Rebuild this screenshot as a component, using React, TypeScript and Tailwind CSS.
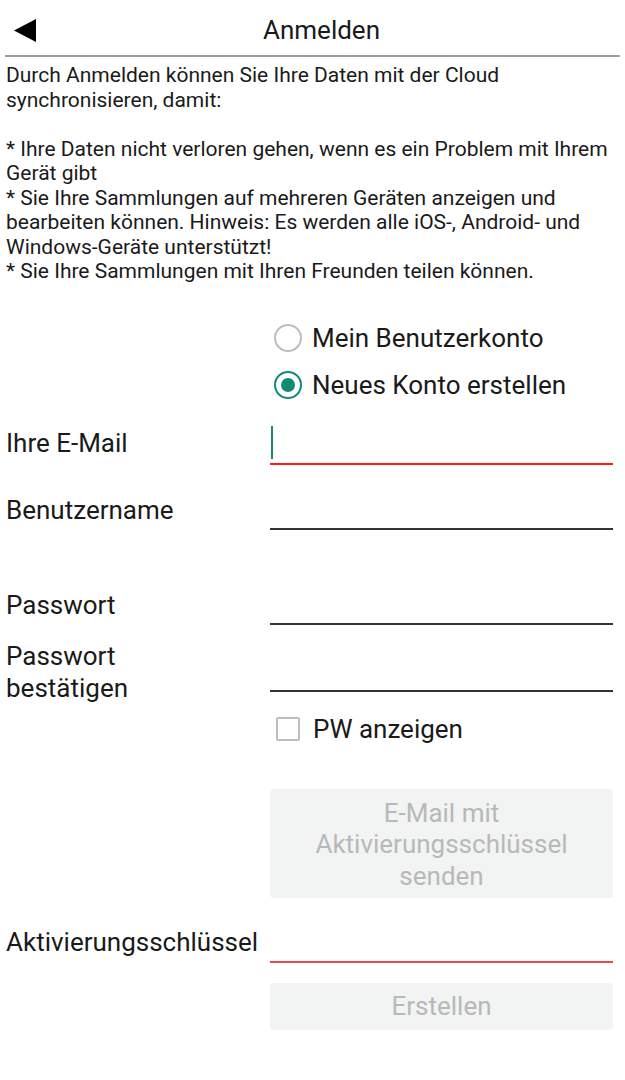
import { useState } from "react";

const font = { fontFamily: "Roboto, 'Noto Sans', sans-serif" };

function Radio({ checked, label }: { checked: boolean; label: string }) {
  return (
    <div className="flex h-[47px] items-center">
      <div
        className={
          checked
            ? "ml-[4px] flex h-[28px] w-[28px] items-center justify-center rounded-full border-[2.5px] border-[#128a78]"
            : "ml-[4px] flex h-[28px] w-[28px] items-center justify-center rounded-full border-[2.5px] border-[#bdbdbd]"
        }
      >
        {checked ? <div className="h-[14px] w-[14px] rounded-full bg-[#128a78]" /> : null}
      </div>
      <span className="ml-[10px] text-[26px] leading-[32px] text-[#1a1a1a]">{label}</span>
    </div>
  );
}

export default function App() {
  const [mode, setMode] = useState("new");

  return (
    <div className="min-h-[1080px] w-[625px] bg-white text-[#1a1a1a]" style={font}>
      <header className="relative mx-[5px] flex h-[57px] items-center justify-center border-b-2 border-[#9e9e9e] pl-[18px]">
        <button className="absolute left-[9px] top-[19px]" aria-label="Zurück">
          <svg width="22" height="23" viewBox="0 0 22 23">
            <polygon points="0,11.5 22,0 22,23" fill="#000" />
          </svg>
        </button>
        <h1 className="mt-[4px] text-[26px] leading-[32px] text-[#1a1a1a]">Anmelden</h1>
      </header>

      <p className="whitespace-pre-line px-[6px] pt-[6px] text-[21px] leading-[24.5px] text-[#1a1a1a]">
        {"Durch Anmelden können Sie Ihre Daten mit der Cloud synchronisieren, damit:\n\n* Ihre Daten nicht verloren gehen, wenn es ein Problem mit Ihrem Gerät gibt\n* Sie Ihre Sammlungen auf mehreren Geräten anzeigen und bearbeiten können. Hinweis: Es werden alle iOS-, Android- und Windows-Geräte unterstützt!\n* Sie Ihre Sammlungen mit Ihren Freunden teilen können."}
      </p>

      <div className="mt-[31px] grid grid-cols-[270px_343px]">
        <div />
        <div>
          <div onClick={() => setMode("login")}>
            <Radio checked={mode === "login"} label="Mein Benutzerkonto" />
          </div>
          <div onClick={() => setMode("new")}>
            <Radio checked={mode === "new"} label="Neues Konto erstellen" />
          </div>
        </div>

        <div className="h-[56px] pl-[6px] pt-[18px] text-[26px] leading-[32px]">Ihre E-Mail</div>
        <div className="flex h-[56px] items-start border-b-[2.5px] border-[#ff1a1a] pt-[17px]">
          <div className="ml-[1px] h-[33px] w-[2px] bg-[#128a78]" />
        </div>

        <div className="h-[65px] pl-[6px] pt-[29px] text-[26px] leading-[32px]">Benutzername</div>
        <div className="h-[65px] border-b-2 border-[#333]" />

        <div className="h-[95px] pl-[6px] pt-[59px] text-[26px] leading-[32px]">Passwort</div>
        <div className="h-[95px] border-b-2 border-[#333]" />

        <div className="h-[67px] pl-[6px] pt-[15px] text-[26px] leading-[32px]">
          Passwort
          <br />
          bestätigen
        </div>
        <div className="h-[67px] border-b-2 border-[#333]" />

        <div className="h-[74px]" />
        <div className="flex h-[74px] items-center">
          <div className="ml-[6px] h-[24px] w-[24px] rounded-[2px] border-2 border-[#bdbdbd]" />
          <span className="ml-[13px] text-[26px] leading-[32px]">PW anzeigen</span>
        </div>

        <div />
        <button className="mt-[23px] h-[109px] rounded-[4px] bg-[#f2f3f3] pt-[4px] text-[26px] leading-[31.5px] text-[#b7b9b9]">
          E-Mail mit
          <br />
          Aktivierungsschlüssel
          <br />
          senden
        </button>

        <div className="h-[65px] whitespace-nowrap pl-[6px] pt-[28px] text-[26px] leading-[32px]">
          Aktivierungsschlüssel
        </div>
        <div className="h-[65px] border-b-2 border-[#f04848]" />

        <div />
        <button className="mt-[20px] h-[47px] rounded-[4px] bg-[#f2f3f3] text-[26px] leading-[32px] text-[#b7b9b9]">
          Erstellen
        </button>
      </div>
    </div>
  );
}
